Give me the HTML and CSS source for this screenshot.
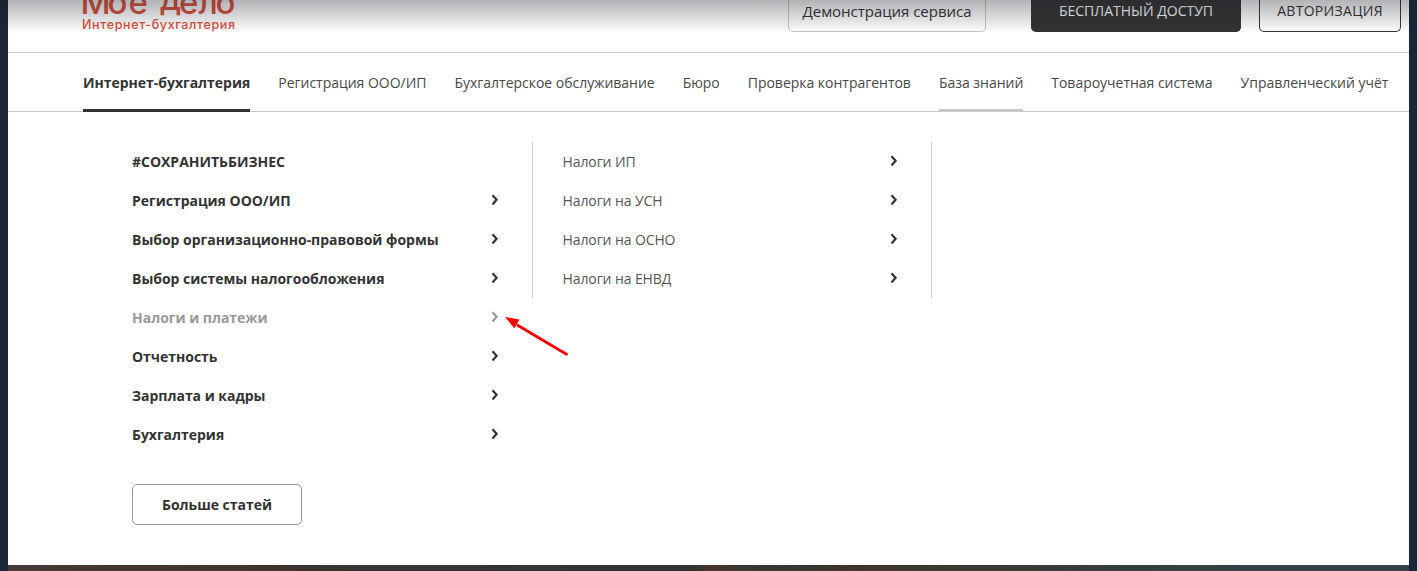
FILE: index.html
```html
<!DOCTYPE html>
<html lang="ru">
<head>
<meta charset="utf-8">
<title>Моё дело</title>
<link rel="stylesheet" href="styles.css">
</head>
<body>
<svg class="defs" width="0" height="0"><symbol id="chev" viewBox="0 0 8 12"><path d="M1.5 1.2 L5.6 5.8 L1.5 10.4" fill="none" stroke="currentColor" stroke-width="2.2"/></symbol></svg>
<div class="page">
  <header class="header">
    <svg class="logo" width="160" height="36" viewBox="0 0 160 36">
      <text class="logo-name" x="-2.5 24.5 45.5 74 77 96 115.5 132.5" y="14 14 14 14 9.5 14 14 14">Мое дело</text>
      <text class="logo-sub" x="-1" y="28.5" textLength="153">Интернет-бухгалтерия</text>
    </svg>
    <a class="btn demo">Демонстрация сервиса</a>
    <a class="btn free">БЕСПЛАТНЫЙ ДОСТУП</a>
    <a class="btn auth">АВТОРИЗАЦИЯ</a>
  </header>
  <nav class="nav">
    <a class="active">Интернет-бухгалтерия</a>
    <a>Регистрация ООО/ИП</a>
    <a>Бухгалтерское обслуживание</a>
    <a>Бюро</a>
    <a>Проверка контрагентов</a>
    <a class="hover">База знаний</a>
    <a>Товароучетная система</a>
    <a>Управленческий учёт</a>
  </nav>
  <main class="menu">
    <div class="primary">
      <ul>
        <li>#СОХРАНИТЬБИЗНЕС</li>
        <li>Регистрация ООО/ИП<svg class="chev"><use href="#chev"/></svg></li>
        <li>Выбор организационно-правовой формы<svg class="chev"><use href="#chev"/></svg></li>
        <li>Выбор системы налогообложения<svg class="chev"><use href="#chev"/></svg></li>
        <li class="current">Налоги и платежи<svg class="chev"><use href="#chev"/></svg></li>
        <li>Отчетность<svg class="chev"><use href="#chev"/></svg></li>
        <li>Зарплата и кадры<svg class="chev"><use href="#chev"/></svg></li>
        <li>Бухгалтерия<svg class="chev"><use href="#chev"/></svg></li>
      </ul>
      <a class="more">Больше статей</a>
    </div>
    <ul class="secondary">
      <li>Налоги ИП<svg class="chev"><use href="#chev"/></svg></li>
      <li>Налоги на УСН<svg class="chev"><use href="#chev"/></svg></li>
      <li>Налоги на ОСНО<svg class="chev"><use href="#chev"/></svg></li>
      <li>Налоги на ЕНВД<svg class="chev"><use href="#chev"/></svg></li>
    </ul>
  </main>
  <div class="hero"></div>
</div>
<div class="shade"></div>
<svg class="arrow" width="70" height="46" viewBox="0 0 70 46"><path d="M62.5 39.3 L14 10.5" stroke="#f00" stroke-width="2.8" stroke-linecap="round"/><path d="M1 2 L15.5 4.5 L13 9 L10.5 13.5 Z" fill="#f00"/></svg>
</body>
</html>
```

FILE: styles.css
```css
* { box-sizing: border-box; }
body {
  margin: 0;
  height: 571px;
  overflow: hidden;
  background: #1b2638;
  font-family: "Open Sans", "Noto Sans", sans-serif;
  font-size: 14px;
  color: #333;
}
.defs { position: absolute; }
ul { list-style: none; margin: 0; padding: 0; }
.page {
  display: flex;
  flex-direction: column;
  width: 1401px;
  height: 571px;
  margin: 0 auto 0 8px;
  background: #fff;
}
.header {
  display: flex;
  align-items: flex-start;
  height: 53px;
  padding-left: 75px;
  border-bottom: 1px solid #c8c8c8;
}
.logo { display: block; overflow: visible; margin-right: 545px; fill: #dd4f3e; }
.logo-name { font: 500 33px Inter, sans-serif; }
.logo-sub { font: 500 12.5px Inter, sans-serif; }
.btn {
  height: 32px;
  border: 1px solid #333;
  border-top: 0;
  border-radius: 0 0 5px 5px;
  text-align: center;
  line-height: 22px;
  white-space: nowrap;
}
.demo { width: 198px; margin-right: 45px; border-color: #c8c8c8; font-size: 15px; line-height: 23px; letter-spacing: -.03px; }
.free { width: 210px; margin-right: 18px; background: #333; color: #fff; }
.auth { width: 142px; letter-spacing: .3px; }
.nav {
  display: flex;
  gap: 28px;
  height: 59px;
  padding-left: 75px;
  border-bottom: 1px solid #c8c8c8;
}
.nav a { flex: none; height: 59px; line-height: 60px; white-space: nowrap; color: #484848; letter-spacing: -.02px; border-bottom: 3px solid transparent; }
.nav .active { font-weight: 700; color: #333; border-color: #333; }
.nav .hover { border-color: #c8c8c8; }
.menu { display: flex; align-items: flex-start; height: 453px; padding: 30px 0 0 124px; }
.primary { width: 400px; font-weight: 700; letter-spacing: -.02px; }
.menu li {
  display: flex;
  justify-content: space-between;
  align-items: center;
  height: 39px;
  white-space: nowrap;
}
.primary li { width: 367px; }
.menu .current { color: #999; }
.chev { width: 8px; height: 12px; margin-top: -1px; }
.more {
  display: block;
  width: 170px;
  height: 41px;
  margin-top: 30px;
  border: 1px solid #999;
  border-radius: 5px;
  line-height: 39px;
  text-align: center;
}
.secondary {
  width: 400px;
  padding: 0 33px 0 29.5px;
  border: solid #c8c8c8;
  border-width: 0 1px;
}
.secondary li { color: #555; letter-spacing: -.1px; }
.secondary .chev { color: #333; }
.hero {
  height: 6px;
  background: linear-gradient(90deg, #443a37 0, #44342f 16%, #333532 25%, #303531 49%, #49342e 50%, #343934 54%, #40352f 60%, #3a3b33 68%, #334144 88%, #334144 100%);
}
.shade { position: absolute; top: 0; left: 0; width: 100%; height: 33px; background: linear-gradient(rgba(27, 30, 38, .34), rgba(27, 30, 38, 0)); }
.arrow { position: absolute; left: 504px; top: 315px; }
```
